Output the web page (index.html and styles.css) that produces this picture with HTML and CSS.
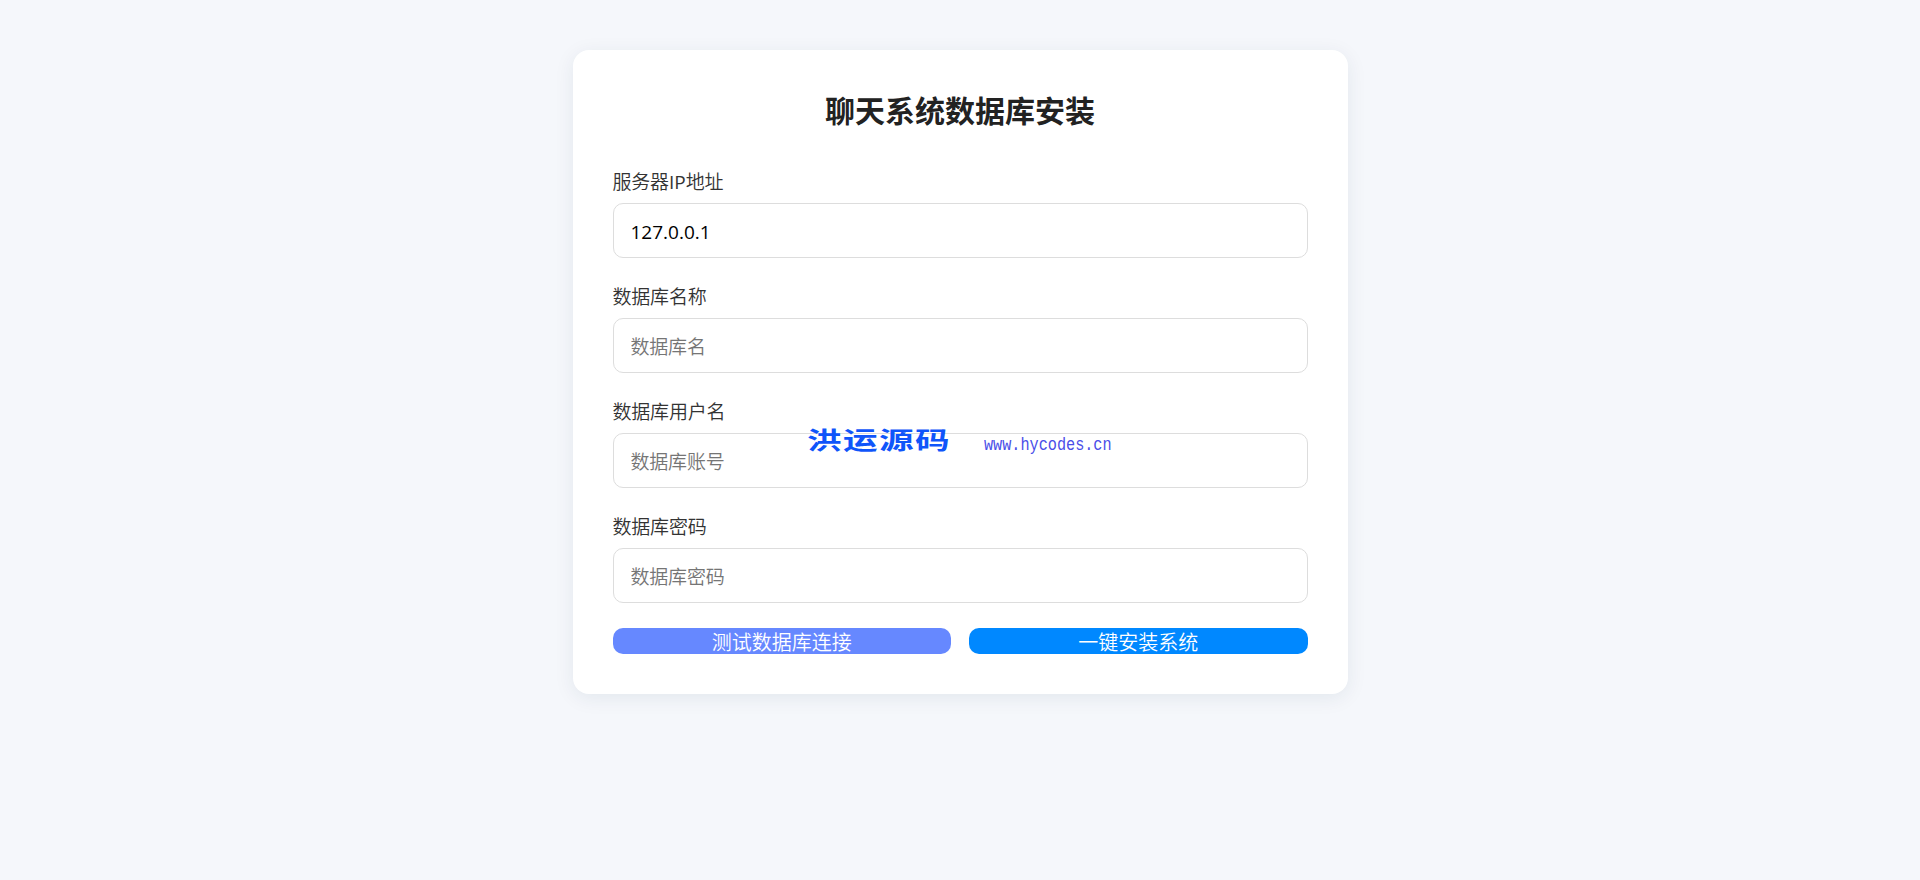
FILE: index.html
```
<!DOCTYPE html>
<html lang="zh-CN">
<head>
    <meta charset="utf-8">
    <title>聊天系统数据库安装</title>
    <meta name="viewport" content="width=device-width, initial-scale=1">
    <link rel="stylesheet" href="styles.css">
</head>
<body>
    <form class="install-box">
        <h2 class="title">聊天系统数据库安装</h2>
        <div class="form-item">
            <label for="host">服务器<span class="en">IP</span>地址</label>
            <input type="text" id="host" value="127.0.0.1">
        </div>
        <div class="form-item">
            <label for="dbname">数据库名称</label>
            <input type="text" id="dbname" placeholder="数据库名">
        </div>
        <div class="form-item">
            <label for="dbuser">数据库用户名</label>
            <input type="text" id="dbuser" placeholder="数据库账号">
        </div>
        <div class="form-item">
            <label for="dbpwd">数据库密码</label>
            <input type="password" id="dbpwd" placeholder="数据库密码">
        </div>
        <div class="btn-group">
            <button type="button" class="btn btn-test">测试数据库连接</button>
            <button type="button" class="btn btn-install">一键安装系统</button>
        </div>
    </form>

    <div class="watermark">
        <span class="mark-name">洪运源码</span>
        <span class="mark-url">www.hycodes.cn</span>
    </div>
</body>
</html>
```
FILE: styles.css
```
* {
    margin: 0;
    padding: 0;
    box-sizing: border-box;
}
body {
    min-height: 100vh;
    background: #f5f7fb;
    font-family: "Open Sans", "Noto Sans CJK SC", sans-serif;
    padding-top: 50px;
}
.install-box {
    width: 775px;
    margin: 0 auto;
    padding: 40px;
    background: #fff;
    border-radius: 16px;
    box-shadow: 0 4px 20px rgba(0, 50, 80, 0.08);
}
.title {
    height: 43px;
    line-height: 42px;
    margin-bottom: 35px;
    text-align: center;
    font-size: 30px;
    font-weight: bold;
    color: #222;
}
.form-item {
    margin-bottom: 25px;
}
.form-item label {
    display: block;
    height: 27px;
    line-height: 28px;
    margin-bottom: 8px;
    font-size: 19px;
    font-weight: 350;
    letter-spacing: -0.2px;
    color: #333;
}
.form-item .en {
    font-weight: 400;
    letter-spacing: 0;
}
.form-item input {
    display: block;
    width: 100%;
    height: 55px;
    padding: 2px 17px 0;
    border: 1px solid #ddd;
    border-radius: 10px;
    background: #fff;
    font-family: inherit;
    font-size: 19px;
    color: #000;
    outline: none;
}
.form-item input::placeholder {
    color: #757575;
    font-weight: 350;
    letter-spacing: -0.2px;
}
.btn-group {
    display: flex;
    gap: 18px;
}
.btn {
    flex: 1;
    height: 26px;
    line-height: 27px;
    padding-top: 1px;
    border: none;
    border-radius: 10px;
    font-family: inherit;
    font-size: 20px;
    font-weight: 350;
    color: #fff;
}
.btn-test {
    background: #6688ff;
}
.btn-install {
    background: #0088ff;
}

/* 水印 */
.watermark {
    position: absolute;
    top: 425px;
    left: 807px;
    display: flex;
    pointer-events: none;
}
.mark-name {
    width: 177px;
    line-height: 30px;
    font-size: 24px;
    font-weight: bold;
    letter-spacing: 1px;
    color: #0f55fa;
    transform: scaleX(1.44);
    transform-origin: 0 50%;
}
.mark-url {
    line-height: 41px;
    font-family: "Liberation Mono", monospace;
    font-size: 15.2px;
    color: #4a4ee8;
    transform: scaleY(1.2);
}
```
